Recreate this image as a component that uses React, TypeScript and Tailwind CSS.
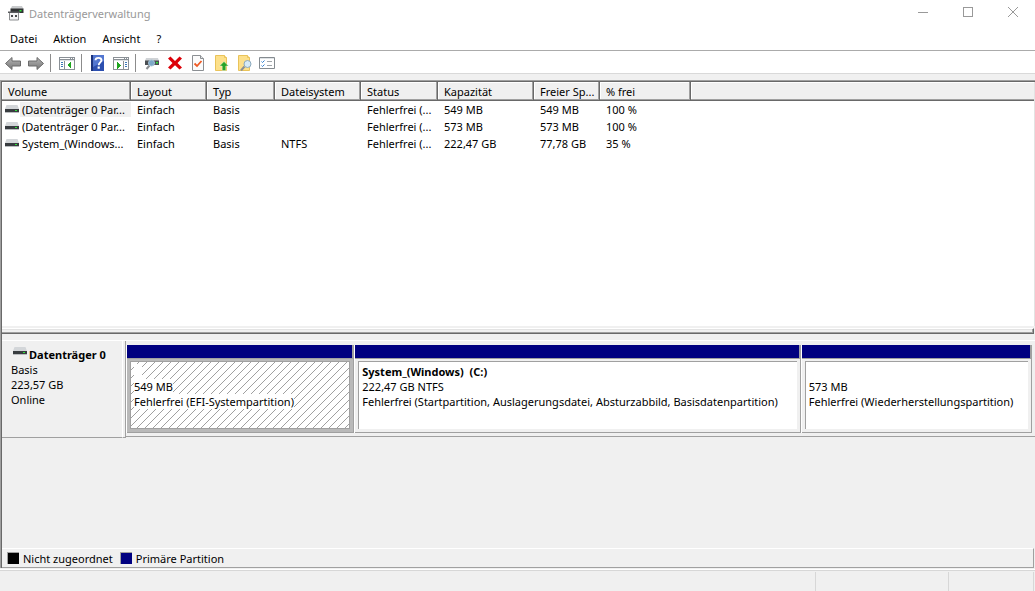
import type { ReactNode } from "react";

type Volume = {
  name: string;
  layout: string;
  type: string;
  fs: string;
  status: string;
  capacity: string;
  free: string;
  percent: string;
};

type PartitionDef = {
  label?: string;
  size: string;
  status: string;
  grow: string;
  selected?: boolean;
};

const COLUMNS = [
  { label: "Volume", width: "w-[129px]" },
  { label: "Layout", width: "w-[76px]" },
  { label: "Typ", width: "w-[68px]" },
  { label: "Dateisystem", width: "w-[86px]" },
  { label: "Status", width: "w-[77px]" },
  { label: "Kapazität", width: "w-[96px]" },
  { label: "Freier Sp...", width: "w-[66px]" },
  { label: "% frei", width: "w-[91px]" },
];

const VOLUMES: Volume[] = [
  { name: "(Datenträger 0 Par...", layout: "Einfach", type: "Basis", fs: "", status: "Fehlerfrei (...", capacity: "549 MB", free: "549 MB", percent: "100 %" },
  { name: "(Datenträger 0 Par...", layout: "Einfach", type: "Basis", fs: "", status: "Fehlerfrei (...", capacity: "573 MB", free: "573 MB", percent: "100 %" },
  { name: "System_(Windows...", layout: "Einfach", type: "Basis", fs: "NTFS", status: "Fehlerfrei (...", capacity: "222,47 GB", free: "77,78 GB", percent: "35 %" },
];

const PARTITIONS: PartitionDef[] = [
  { size: "549 MB", status: "Fehlerfrei (EFI-Systempartition)", grow: "flex-[228_1_0px]", selected: true },
  {
    label: "System_(Windows)  (C:)",
    size: "222,47 GB NTFS",
    status: "Fehlerfrei (Startpartition, Auslagerungsdatei, Absturzabbild, Basisdatenpartition)",
    grow: "flex-[447_1_0px]",
  },
  { size: "573 MB", status: "Fehlerfrei (Wiederherstellungspartition)", grow: "flex-[231_1_0px]" },
];

function DriveIcon() {
  return (
    <svg width="14" height="9" viewBox="0 0 14 9" className="shrink-0" aria-hidden="true">
      <path d="M1.500 0h11L14 4H0z" fill="#d3d6d9" />
      <path d="M0 4h14v3H0z" fill="#383c40" />
      <path d="M0 7h14v1H0z" fill="#b9bcbf" />
      <path d="M10 5h2v1h-2z" fill="#2ee63a" />
    </svg>
  );
}

function AppIcon() {
  return (
    <svg width="16" height="16" viewBox="0 0 16 16" className="shrink-0" aria-hidden="true">
      <path d="M4 1h10l1.500 3H2.500z" fill="#c9cbcd" />
      <path d="M2.500 3.500h13V8h-13z" fill="#303234" />
      <path d="M11.500 5h2v1.500h-2z" fill="#2ee63a" />
      <path d="M1.500 7.500h9V15h-9z" fill="#f5f5f5" stroke="#8b8d8f" />
      <path d="M0 6.500h12V8H0z" fill="#5a5c5e" />
      <path d="M3 10h2v2H3zM7 10h2v2H7z" fill="#4a4c4e" />
    </svg>
  );
}

function ArrowIcon({ forward }: { forward?: boolean }) {
  return (
    <svg width="16" height="16" viewBox="0 0 16 16" aria-hidden="true">
      <defs>
        <linearGradient id="arrow-fill" x1="0" y1="0" x2="0" y2="1">
          <stop offset="0" stopColor="#b5b5b5" />
          <stop offset="1" stopColor="#777777" />
        </linearGradient>
      </defs>
      <path
        d={forward ? "M15.500 8.500L9 2.500V6H.5v5H9v3.500z" : "M.5 8.500L7 2.500V6h8.500v5H7v3.500z"}
        fill="url(#arrow-fill)"
        stroke="#6a6a6a"
        strokeLinejoin="round"
      />
    </svg>
  );
}

function PaneIcon({ right }: { right?: boolean }) {
  return (
    <svg width="16" height="16" viewBox="0 0 16 16" shapeRendering="crispEdges" aria-hidden="true">
      <path d="M0 2h16v13H0z" fill="#8a9096" />
      <path d="M1 6h14v8H1z" fill="#ffffff" />
      <path d="M1 3h10v1H1zM12 3h1v1h-1zM14 3h1v1h-1z" fill="#ffffff" />
      <path d="M1 5h14v1H1z" fill="#dfe3e6" />
      {right ? (
        <>
          <path d="M10 6h1v8h-1z" fill="#8a9096" />
          <path d="M12 7h2v1h-2zM12 9h2v1h-2zM12 11h2v1h-2z" fill="#3e78b8" />
          <path d="M4 7l4 3-4 4z" fill="#1fa51f" />
        </>
      ) : (
        <>
          <path d="M5 6h1v8H5z" fill="#8a9096" />
          <path d="M2 7h2v1H2zM2 9h2v1H2zM2 11h2v1H2z" fill="#3e78b8" />
          <path d="M12 7v7l-4-4z" fill="#1fa51f" />
        </>
      )}
    </svg>
  );
}

function HelpIcon() {
  return (
    <svg width="16" height="16" viewBox="0 0 16 16" aria-hidden="true">
      <path d="M1 0h13v16H1z" fill="#2c4fb0" />
      <path d="M1 0h2v16H1z" fill="#1c347d" />
      <path d="M3 0h11v6L3 12z" fill="#5276d0" />
      <path d="M5.500 5.300c0-3.300 6-3.300 6 0 0 2-2.800 2.300-2.800 5" fill="none" stroke="#ffffff" strokeWidth="1.900" />
      <path d="M7.600 11.500h2.200v2.200H7.600z" fill="#ffffff" />
    </svg>
  );
}

function RescanIcon() {
  return (
    <svg width="16" height="16" viewBox="0 0 16 16" aria-hidden="true">
      <path d="M2 3h12l1 3H1z" fill="#d0d3d6" />
      <path d="M1 5.500h14V10H1z" fill="#4a4e52" />
      <path d="M12 7h2v1.500h-2z" fill="#2ee63a" />
      <path d="M5.500 10.500L2.500 14" stroke="#8b8f93" strokeWidth="2" />
      <circle cx="7.500" cy="8" r="3" fill="#7da8c8" stroke="#a5c3d8" />
    </svg>
  );
}

function DeleteIcon() {
  return (
    <svg width="16" height="16" viewBox="0 0 16 16" aria-hidden="true">
      <path d="M3.500 1.500L8 6l4.500-4.500 2.500 2L10.500 8l4.500 4.500-2.500 2L8 10.300l-4.500 4.200-2.500-2L5.500 8 1 3.500z" fill="#dc0008" />
    </svg>
  );
}

function CheckPageIcon() {
  return (
    <svg width="16" height="16" viewBox="0 0 16 16" aria-hidden="true">
      <path d="M2.500.5h8l3 3v12h-11z" fill="#fbfbfb" stroke="#8b8f93" />
      <path d="M10.500.5v3h3" fill="#e4e6e8" stroke="#8b8f93" />
      <path d="M4.500 8.500L7 11l4.500-5" fill="none" stroke="#ee5a24" strokeWidth="1.800" />
    </svg>
  );
}

function FolderPage({ children }: { children: ReactNode }) {
  return (
    <svg width="16" height="16" viewBox="0 0 16 16" aria-hidden="true">
      <path d="M2.500.5h9l2 2V15.500h-11z" fill="#fde08a" stroke="#e9c35a" />
      <path d="M11.500.5v2h2" fill="#fff4cc" stroke="#e9c35a" />
      {children}
    </svg>
  );
}

function UpIcon() {
  return (
    <FolderPage>
      <path d="M11 6.500L15.500 11h-2.700v4.500H9.200V11H6.500z" fill="#28a428" stroke="#ffffff" strokeWidth=".4" />
    </FolderPage>
  );
}

function FindIcon() {
  return (
    <FolderPage>
      <path d="M8.500 11.500L5 15.500" stroke="#8b8f93" strokeWidth="2" />
      <circle cx="11.500" cy="9" r="3.500" fill="#d6eaf6" stroke="#8ba9bd" />
    </FolderPage>
  );
}

function OptionsIcon() {
  return (
    <svg width="16" height="16" viewBox="0 0 16 16" aria-hidden="true">
      <path d="M.5 2.500h15v11H.5z" fill="#ffffff" stroke="#858b90" />
      <path d="M1 3h14v1H1z" fill="#dfe3e6" />
      <path d="M2.500 6.500l1 1 2-2M2.500 10.500l1 1 2-2" fill="none" stroke="#2f7fd0" />
      <path d="M8 6.500h5M8 10.500h5" stroke="#a0a5a9" />
    </svg>
  );
}

const TOOLS: { label: string; icon: ReactNode; sep?: boolean }[] = [
  { label: "Zurück", icon: <ArrowIcon /> },
  { label: "Vorwärts", icon: <ArrowIcon forward />, sep: true },
  { label: "Konsolenstruktur", icon: <PaneIcon />, sep: true },
  { label: "Hilfe", icon: <HelpIcon /> },
  { label: "Aktionsbereich", icon: <PaneIcon right />, sep: true },
  { label: "Neu einlesen", icon: <RescanIcon /> },
  { label: "Löschen", icon: <DeleteIcon /> },
  { label: "Eigenschaften", icon: <CheckPageIcon /> },
  { label: "Aufwärts", icon: <UpIcon /> },
  { label: "Suchen", icon: <FindIcon /> },
  { label: "Optionen", icon: <OptionsIcon /> },
];

function TitleBar() {
  return (
    <header className="flex h-[26px] items-center pl-2 text-[#999999]">
      <AppIcon />
      <h1 className="ml-[5px] flex-1">Datenträgerverwaltung</h1>
      <div className="flex pb-[2px]">
        <button aria-label="Minimieren" className="flex w-[45px] justify-center">
          <svg width="10" height="10" viewBox="0 0 10 10" shapeRendering="crispEdges">
            <path d="M0 5h10v1H0z" fill="#999999" />
          </svg>
        </button>
        <button aria-label="Maximieren" className="flex w-[45px] justify-center">
          <svg width="10" height="10" viewBox="0 0 10 10" shapeRendering="crispEdges">
            <path d="M.5.5h9v9h-9z" fill="none" stroke="#999999" />
          </svg>
        </button>
        <button aria-label="Schließen" className="flex w-[45px] justify-center">
          <svg width="10" height="10" viewBox="0 0 10 10">
            <path d="M0 0l10 10M10 0L0 10" stroke="#999999" />
          </svg>
        </button>
      </div>
    </header>
  );
}

function VolumeTable() {
  return (
    <table className="w-full table-fixed border-collapse text-left whitespace-nowrap">
      <thead>
        <tr className="h-[19px] bg-[#f0f0f0]">
          {COLUMNS.map((col) => (
            <th
              key={col.label}
              className={`${col.width} p-0 pl-[6px] font-normal shadow-[inset_-1px_-1px_#696969,inset_-2px_-2px_#a0a0a0,inset_1px_1px_#ffffff]`}
            >
              {col.label}
            </th>
          ))}
          <td className="shadow-[inset_0_-1px_#696969,inset_0_-2px_#a0a0a0,inset_1px_1px_#ffffff]" />
        </tr>
      </thead>
      <tbody>
        {VOLUMES.map((v, i) => (
          <tr key={i} className="h-[17px]">
            <td className="p-0 pl-[3px]">
              <div className="flex items-center gap-px">
                <DriveIcon />
                <span className={`flex-1 overflow-hidden pl-[2px] ${i === 0 ? "bg-[#f0f0f0]" : ""}`}>{v.name}</span>
              </div>
            </td>
            <td className="p-0 pl-[6px]">{v.layout}</td>
            <td className="p-0 pl-[6px]">{v.type}</td>
            <td className="p-0 pl-[6px]">{v.fs}</td>
            <td className="p-0 pl-[6px]">{v.status}</td>
            <td className="p-0 pl-[6px]">{v.capacity}</td>
            <td className="p-0 pl-[6px]">{v.free}</td>
            <td className="p-0 pl-[6px]">{v.percent}</td>
            <td className="p-0" />
          </tr>
        ))}
      </tbody>
    </table>
  );
}

function Hatch() {
  return (
    <svg className="absolute inset-0 h-full w-full" aria-hidden="true">
      <defs>
        <pattern id="hatch" width="8" height="8" patternUnits="userSpaceOnUse">
          <path
            d="M7 0h1v1H7zM6 1h1v1H6zM5 2h1v1H5zM4 3h1v1H4zM3 4h1v1H3zM2 5h1v1H2zM1 6h1v1H1zM0 7h1v1H0z"
            fill="#a0a0a0"
            shapeRendering="crispEdges"
          />
        </pattern>
      </defs>
      <rect width="100%" height="100%" fill="url(#hatch)" />
    </svg>
  );
}

function Partition({ label, size, status, grow, selected }: PartitionDef) {
  return (
    <section className={`flex min-w-0 flex-col border-l border-white ${grow}`}>
      <div className="h-[13px] border-r-2 border-[#a0a0a0] bg-[#000080]" />
      <div
        className={`flex-1 border-y border-r border-[#a0a0a0] px-[3px] pt-[2px] pb-[3px] ${
          selected ? "bg-[#b9b9b9]" : "bg-[#f0f0f0]"
        }`}
      >
        <div
          className={`relative h-full overflow-hidden border-t border-l border-[#a0a0a0] bg-white pt-[2px] pl-[3px] leading-[15px] whitespace-pre ${
            selected ? "border-r border-b" : ""
          }`}
        >
          {selected && <Hatch />}
          <p className="relative h-[15px] w-fit min-w-2 bg-white font-bold">{label}</p>
          <p className="relative w-fit bg-white">{size}</p>
          <p className="relative w-fit bg-white">{status}</p>
        </div>
      </div>
    </section>
  );
}

export default function App() {
  return (
    <div className="flex h-screen min-h-[420px] flex-col overflow-hidden bg-[#f0f0f0] font-['Noto_Sans','Open_Sans',sans-serif] text-[11px] leading-[15px] text-black">
      <div className="bg-white">
        <TitleBar />
        <nav className="flex h-[25px] items-center gap-4 border-b border-[#ababab] px-[10px]">
          <button>Datei</button>
          <button>Aktion</button>
          <button>Ansicht</button>
          <button>?</button>
        </nav>
        <div className="flex h-[23px] items-center border-b border-[#d9d9d9] pt-[2px] pl-[5px]">
          {TOOLS.map((tool) => (
            <div key={tool.label} className="flex items-center">
              <button aria-label={tool.label} className={tool.sep ? "mr-[6px]" : "mr-[7px]"}>
                {tool.icon}
              </button>
              {tool.sep && <span className="mr-2 h-[18px] w-px bg-[#8c8c8c]" />}
            </div>
          ))}
        </div>
      </div>

      <main className="mt-[6px] flex min-h-0 flex-1 flex-col border-t border-l border-[#a0a0a0]">
        <div className="flex min-h-0 flex-[256_1_0px] flex-col border-t border-l border-[#696969]">
          <div className="min-h-0 flex-1 overflow-hidden border-r border-[#e3e3e3] bg-white">
            <VolumeTable />
          </div>
          <div className="mt-[2px] mr-px h-[6px] border-t border-r border-b border-t-white border-r-[#696969] border-b-[#696969] shadow-[inset_-1px_-1px_#a0a0a0,inset_0_1px_#e3e3e3]" />
        </div>

        <div className="flex min-h-0 flex-[231_1_0px] flex-col border-l border-[#696969] pt-[6px]">
          <div className="flex h-[98px] border-t border-white">
            <div className="w-[121px] shrink-0 border-r border-b border-r-white border-b-[#a0a0a0] pt-[6px] pl-[9px]">
              <h2 className="flex gap-[2px] pl-[2px] font-bold">
                <DriveIcon />
                Datenträger 0
              </h2>
              <p>Basis</p>
              <p>223,57 GB</p>
              <p>Online</p>
            </div>
            <div className="w-[3px] shrink-0 border-r border-b border-[#a0a0a0]" />
            <div className="mb-px flex min-w-0 flex-1 border-b border-[#a0a0a0] pt-1 pr-[3px] pb-[3px]">
              {PARTITIONS.map((p) => (
                <Partition key={p.status} {...p} />
              ))}
            </div>
          </div>

          <div className="mt-auto mr-px flex h-5 items-center border-t border-r border-b border-t-white border-r-[#a0a0a0] border-b-[#a0a0a0] pl-[5px]">
            <span className="mr-1 size-3 border-t border-l border-[#a0a0a0] bg-black" />
            <span className="mr-[7px]">Nicht zugeordnet</span>
            <span className="mr-1 size-3 border-t border-l border-[#a0a0a0] bg-[#000080]" />
            <span>Primäre Partition</span>
          </div>
        </div>
      </main>

      <footer className="mt-[2px] flex h-[21px] border-t border-[#d7d7d7] pt-px shadow-[0_-1px_#ffffff]">
        <div className="flex-1 border-r border-[#d7d7d7]" />
        <div className="w-[133px] border-r border-[#d7d7d7]" />
        <div className="mr-px w-[85px] border-r border-[#d7d7d7]" />
      </footer>
    </div>
  );
}
